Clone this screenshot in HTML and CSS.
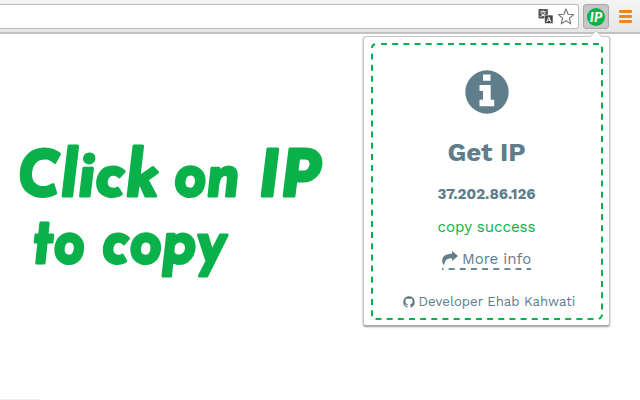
FILE: index.html
```
<!DOCTYPE html>
<html lang="en">
<head>
<meta charset="utf-8">
<title>Get IP</title>
<link rel="stylesheet" href="styles.css">
</head>
<body>
<header class="toolbar">
  <div class="address">
    <svg class="translate" viewBox="0 0 16 16"><rect x="0" y="0" width="10" height="10" rx="1" fill="#555"/><path d="M2 3H8M5 1.5V3M3 4Q4 7 8 8M7 4Q6 7 2 8" stroke="#fff" fill="none"/><rect x="6.5" y="6.5" width="9" height="9" rx="1" fill="#444" stroke="#fff" stroke-width=".6"/><path d="M8.7 14L11 8.5L13.3 14M9.5 12H12.5" stroke="#fff" fill="none"/></svg>
    <svg class="star" viewBox="0 0 18 18"><path d="M9 1L11.2 6.6L17 7L12.6 10.8L14 16.8L9 13.5L4 16.8L5.4 10.8L1 7L6.8 6.6Z" fill="#fff" stroke="#777" stroke-width="1.2" stroke-linejoin="round"/></svg>
  </div>
  <div class="extension"><span class="badge">IP</span></div>
  <div class="menu"><i></i><i></i><i></i></div>
</header>
<main class="page">
  <h1 class="headline">
    <svg viewBox="0 0 340 180">
      <text class="large" x="17" y="66" textLength="142" lengthAdjust="spacingAndGlyphs">Click</text>
      <text class="large" x="174" y="66" textLength="66" lengthAdjust="spacingAndGlyphs">on</text>
      <text class="large" x="258" y="66" textLength="62" lengthAdjust="spacingAndGlyphs">IP</text>
      <text class="large" x="32" y="132.5" textLength="53" lengthAdjust="spacingAndGlyphs">to</text>
      <text class="large" x="102" y="132.5" textLength="124" lengthAdjust="spacingAndGlyphs">copy</text>
    </svg>
  </h1>
  <section class="popup">
    <svg class="arrow" viewBox="0 0 12 7"><path d="M0 7L6 1L12 7Z" fill="#fff"/><path d="M0 6.5L6 .7L12 6.5" fill="none" stroke="#bbb" stroke-width=".7"/></svg>
    <svg class="frame" viewBox="371 43 232 278" fill="none" stroke="#0ab14b" stroke-width="2">
      <path d="M381 44H599.2M602 46.7V310M375.5 319H597M372 53.5V317" stroke-dasharray="6 5.16"/>
      <path d="M372 48Q372 45 375 44M602 314.5Q602 317 599 319"/>
    </svg>
    <svg class="info" viewBox="0 0 44 44"><circle cx="22" cy="22" r="21.7" fill="#607d8b"/><path d="M18 4.5H25.5V10.7H18ZM14.5 15H25.7V29.7H29.2V36.2H14.5V29.7H18V21H14.5Z" fill="#fff"/></svg>
    <h2 class="title">Get IP</h2>
    <p class="ip">37.202.86.126</p>
    <p class="status">copy success</p>
    <p class="more"><svg class="share" viewBox="0 0 16 14"><path d="M10 0L16 5L10 10V7.2Q3.3 6.5 2.2 13.5H1Q-2.5 3 10 2.7Z" fill="#607d8b"/></svg><span class="more-label">More info</span><svg class="underline" viewBox="0 0 89 2"><path d="M0 1H89" stroke="#3c6076" stroke-width="1.6" stroke-dasharray="6 5.15" stroke-dashoffset="4.5"/></svg></p>
    <p class="credit"><svg class="github" viewBox="0 0 16 16"><path d="M8 .4A7.6 7.6 0 0 0 5.6 15.2Q6 15.3 6 14.7V13.3Q3.8 13.8 3.4 12.3Q3 11.5 2.4 11.1Q3.6 10.8 4.3 12Q5 12.7 6.1 12.2Q6.1 11.5 6.6 11Q3.3 10.6 3.1 7.4Q3.1 6 4 5.2Q3.6 4.2 4 3.2Q5 3.2 6 4Q8 3.5 10 4Q11 3.2 12 3.2Q12.4 4.2 12 5.2Q12.9 6 12.9 7.4Q12.7 10.6 9.4 11Q10 11.6 10 12.6V14.7Q10 15.3 10.4 15.2A7.6 7.6 0 0 0 8 .4Z" fill="#607d8b"/></svg><span class="credit-label">Developer Ehab Kahwati</span></p>
  </section>
</main>
<footer class="edge"></footer>
</body>
</html>
```
FILE: styles.css
```
* { box-sizing: border-box; }
body { margin: 0; width: 640px; height: 400px; overflow: hidden; background: #fff; display: flex; flex-direction: column; font-family: "Work Sans", Inter, sans-serif; color: #607d8b; }
h1, h2, p { margin: 0; }
svg { display: block; }
.toolbar { height: 34px; flex: none; display: flex; align-items: flex-start; padding-top: 4px; background: linear-gradient(#f5f5f5, #e6e6e6); border-bottom: 2px solid #c1c1c1; }
.address { width: 579px; height: 25px; border: 1px solid #bbb; border-left: 0; border-radius: 0 3px 3px 0; background: #fff; display: flex; justify-content: flex-end; gap: 3px; padding: 4px 3px 0 0; }
.translate { width: 16px; height: 15px; }
.star { width: 18px; height: 17px; margin-top: -1px; }
.extension { width: 26px; height: 25px; margin-left: 4px; border: 1px solid #aaa; border-radius: 3px; background: #c6c6c6; display: flex; align-items: center; justify-content: center; }
.badge { width: 18px; height: 18px; border-radius: 50%; background: #0ab14b; color: #fff; font: italic 900 14px/18px Lato, sans-serif; text-align: center; }
.menu { width: 13px; margin: 6px 0 0 10px; display: grid; gap: 2px; }
.menu i { height: 3px; border-radius: 1px; background: #ed861c; }
.page { flex: 1; display: flex; }
.headline { width: 363px; padding-top: 96px; }
.headline svg { width: 340px; height: 180px; overflow: visible; }
.large { font-family: "Josefin Sans", Lato, sans-serif; font-style: italic; font-weight: 700; font-size: 64px; fill: #0ab14b; stroke: #0ab14b; stroke-width: 3; stroke-linejoin: round; }
.popup { position: relative; width: 247px; height: 290px; margin-top: 2px; border: 1px solid #c5c5c5; border-bottom-color: #aaa; border-radius: 3px; background: #fff; box-shadow: 0 1px 2px #999; display: flex; flex-direction: column; align-items: center; padding-top: 33px; }
.arrow { position: absolute; left: 226px; top: -7px; width: 12px; height: 7px; }
.frame { position: absolute; left: 7px; top: 6px; width: 232px; height: 278px; }
.info { width: 44px; height: 44px; }
.title { margin-top: 23px; font-size: 26px; line-height: 30px; font-weight: 700; }
.ip { margin-top: 17px; font-size: 15px; line-height: 20px; font-weight: 700; }
.status { margin-top: 13px; font-size: 15.1px; line-height: 20px; color: #0ab14b; }
.more { margin-top: 12px; width: 89px; display: flex; flex-wrap: wrap; font-size: 15px; line-height: 20px; }
.share { width: 16px; height: 14px; margin: 2px 4px 0 0; }
.more-label, .credit-label { white-space: nowrap; }
.more-label { width: 69px; }
.underline { width: 89px; height: 2px; margin-top: -1px; }
.credit { margin-top: 22px; width: 172px; display: flex; font-size: 13.2px; line-height: 20px; }
.github { flex: none; width: 12px; height: 12px; margin: 4px 4px 0 2px; }
.edge { height: 1px; width: 40px; background: #eee; }
```
